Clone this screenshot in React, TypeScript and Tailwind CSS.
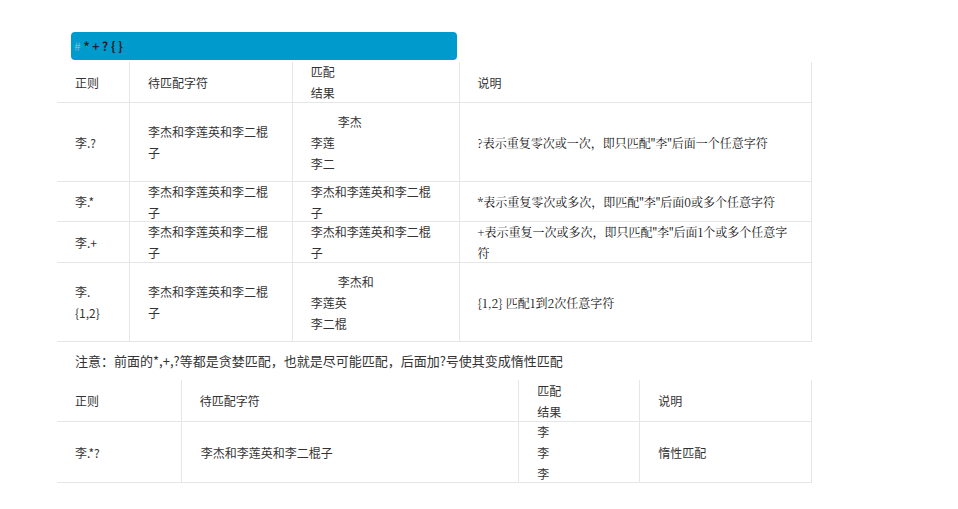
const F = { fontFamily: '"Microsoft YaHei","Noto Sans CJK SC","Liberation Sans",sans-serif' };
const S = { fontFamily: '"Noto Serif CJK SC","Noto Sans CJK SC",serif' };

function Row({ h, cols, cells, last }: { h: number; cols: number[]; cells: React.ReactNode[]; last?: boolean }) {
  return (
    <div className={`flex border-b border-[#e6e6e6]`} style={{ height: h }}>
      {cells.map((c, i) => (
        <div key={i} className={`flex items-center px-[18px] leading-[21px] ${i < cells.length - 1 ? 'border-r border-[#e6e6e6]' : ''}`} style={{ width: cols[i] }}>
          <div>{c}</div>
        </div>
      ))}
    </div>
  );
}

export default function App() {
  const c1 = [73, 163, 167, 352];
  const c2 = [125, 338, 121, 171];
  const two = (a: string) => <>{a}<br />子</>;
  const s = '李杰和李莲英和李二棍';
  return (
    <div className="w-[958px] h-[509px] bg-white text-[12px] text-[#333]" style={F}>
      <div className="pt-[32px] pl-[71px]">
        <div className="w-[386px] h-[28px] rounded-[4px] bg-[#009bcd] flex items-center pl-[3px] text-[12px] font-bold text-[#222]">
          <span className="text-[#9ad] font-normal">#</span>&nbsp;*&nbsp;+&nbsp;?&nbsp;{'{ }'}
        </div>
      </div>
      <div className="ml-[57px] w-[755px] border-r border-[#e6e6e6] mt-[2px]">
        <Row h={41} cols={c1} cells={['正则', '待匹配字符', <>匹配<br />结果</>, '说明']} />
        <Row h={79} cols={c1} cells={['李.?', two(s), <><span className="pl-[27px]">李杰</span><br />李莲<br />李二</>, <span style={S} className="text-[#111]">?表示重复零次或一次，即只匹配"李"后面一个任意字符</span>]} />
        <Row h={40} cols={c1} cells={['李.*', two(s), two(s), <span style={S} className="text-[#111]">*表示重复零次或多次，即匹配"李"后面0或多个任意字符</span>]} />
        <Row h={41} cols={c1} cells={['李.+', two(s), two(s), <span style={S} className="text-[#111]">+表示重复一次或多次，即只匹配"李"后面1个或多个任意字符</span>]} />
        <Row h={79} cols={c1} cells={[<>李.<br />{'{1,2}'}</>, two(s), <><span className="pl-[27px]">李杰和</span><br />李莲英<br />李二棍</>, <span style={S} className="text-[#111]">{'{1,2}'} 匹配1到2次任意字符</span>]} />
      </div>
      <div className="ml-[75px] h-[38px] flex items-center text-[13px]">注意：前面的*,+,?等都是贪婪匹配，也就是尽可能匹配，后面加?号使其变成惰性匹配</div>
      <div className="ml-[57px] w-[755px] border-r border-[#e6e6e6]">
        <Row h={42} cols={c2} cells={['正则', '待匹配字符', <>匹配<br />结果</>, '说明']} />
        <Row h={61} cols={c2} cells={['李.*?', <span className="pl-[1px]">李杰和李莲英和李二棍子</span>, <>李<br />李<br />李</>, '惰性匹配']} />
      </div>
    </div>
  );
}
